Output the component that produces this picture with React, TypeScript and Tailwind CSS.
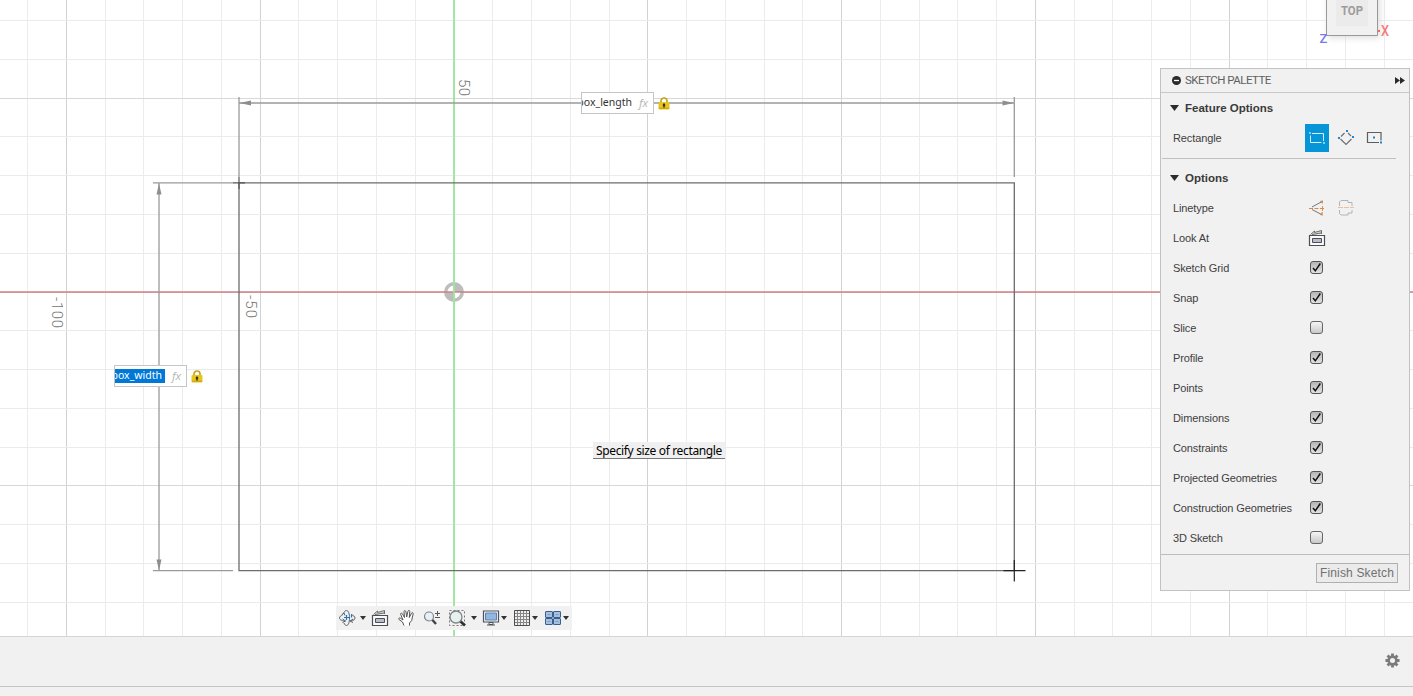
import type { ReactNode } from "react";

const STEP = 38.76;
const ORIGIN = { x: 454, y: 292 };

const columns = Array.from({ length: 37 }, (_, i) => i - 11);
const rows = Array.from({ length: 17 }, (_, i) => i - 7);

const toggles = [
  { label: "Sketch Grid", on: true },
  { label: "Snap", on: true },
  { label: "Slice", on: false },
  { label: "Profile", on: true },
  { label: "Points", on: true },
  { label: "Dimensions", on: true },
  { label: "Constraints", on: true },
  { label: "Projected Geometries", on: true },
  { label: "Construction Geometries", on: true },
  { label: "3D Sketch", on: false },
];

function SketchCanvas() {
  return (
    <svg width="1413" height="636" className="absolute inset-0 font-['Roboto',sans-serif]">
      {/* Grid */}
      {columns.map((i) => (
        <line
          key={`c${i}`}
          x1={Math.floor(ORIGIN.x + i * STEP) + 0.5}
          x2={Math.floor(ORIGIN.x + i * STEP) + 0.5}
          y1="0"
          y2="636"
          stroke={i % 5 === 0 ? "#d2d2d2" : "#ececec"}
        />
      ))}
      {rows.map((i) => (
        <line
          key={`r${i}`}
          x1="0"
          x2="1413"
          y1={Math.floor(ORIGIN.y + i * STEP) + 0.5}
          y2={Math.floor(ORIGIN.y + i * STEP) + 0.5}
          stroke={i % 5 === 0 ? "#d8d8d8" : "#ebebeb"}
        />
      ))}

      {/* Origin */}
      <circle cx="454" cy="292" r="10" fill="#bdbdbd" />
      <path d="M454 292V285.500A6.500 6.500 0 0 0 447.500 292ZM454 292h6.500a6.500 6.500 0 0 1-6.500 6.500Z" fill="#fff" />

      {/* Axes */}
      <path d="M0 292H1413" stroke="#cd8286" strokeWidth="1.300" />
      <path d="M454 0V636" stroke="#9ae79c" strokeWidth="1.800" />

      {/* Rectangle */}
      <path d="M239 182.800H1014.300V570.700H239Z" fill="none" stroke="#6c6c6c" strokeWidth="1.300" />
      <path d="M233 182.800h12M239 177v12" stroke="#555" strokeWidth="1.200" />
      <path d="M1003.500 570.700h22M1014.300 560v21.500" stroke="#222" strokeWidth="1.200" />

      {/* Dimension lines */}
      <g stroke="#9a9a9a" strokeWidth="1.300" fill="none">
        <path d="M239 103H1014M239 97v80M1014.300 97v80" />
        <path d="M159 183V571M153 182.800h80M153 570.700h80" />
      </g>
      <g fill="#8e8e8e">
        <path d="M239.500 103l11.500-2.500v5ZM1014 103l-11.500-2.500v5Z" />
        <path d="M159 183.500l-2.500 11h5ZM159 570.500l-2.500-11h5Z" />
      </g>

      {/* Axis labels */}
      <g fill="#747474" fontSize="15" fontWeight="300">
        <text transform="translate(458.500 79) rotate(90)" textLength="17">50</text>
        <text transform="translate(246 295) rotate(90)" textLength="23">-50</text>
        <text transform="translate(52 297) rotate(90)" textLength="31">-100</text>
      </g>
    </svg>
  );
}

function Lock() {
  return (
    <svg width="12" height="13" viewBox="0 0 12 13">
      <path d="M3 6V4a3 3 0 0 1 6 0v2" fill="none" stroke="#c9a321" strokeWidth="1.700" />
      <rect x=".5" y="5" width="11" height="7.500" rx="1" fill="#e7c51b" />
      <path d="M1 10.500h10v1.500H1Z" fill="#d0a818" />
      <path d="M6 6.500v4M4.800 8h2.400" stroke="#302a10" strokeWidth="1.500" />
    </svg>
  );
}

function DimensionInput({ value, selected }: { value: string; selected?: boolean }) {
  return (
    <div className="flex items-center gap-1">
      <div className="flex h-[22px] w-[73px] items-center justify-between overflow-hidden border border-[#c5c5c5] bg-white pr-[5px] font-['Noto_Sans',sans-serif]">
        <span className="flex h-[14px] w-[50px] justify-end overflow-hidden">
          <span
            className={
              selected
                ? "bg-[#0078d7] pr-[3px] text-[10.5px] leading-[13px] text-white"
                : "text-[10.5px] leading-[13px] text-[#333]"
            }
          >
            {value}
          </span>
        </span>
        <span className="font-['Open_Sans',sans-serif] text-[11.5px] leading-[14px] text-[#b5b5b5] italic">fx</span>
      </div>
      <Lock />
    </div>
  );
}

function ViewCube() {
  return (
    <svg width="80" height="50" className="absolute top-0 left-[1315px] font-['Roboto',sans-serif]">
      <defs>
        <filter id="cube-shadow" x="-30%" y="-30%" width="160%" height="160%">
          <feGaussianBlur stdDeviation="3" />
        </filter>
      </defs>
      <rect x="13" y="-8" width="52" height="46" fill="#c8c8c8" opacity=".6" filter="url(#cube-shadow)" />
      <path d="M11.500 -1V35.500H62.500V-1" fill="#f1f1f1" stroke="#999" />
      <rect x="21" y="0" width="32" height="26" fill="#ebebeb" />
      <text x="26" y="15" fontSize="13" fontWeight="700" fill="#9c9c9c" textLength="22" lengthAdjust="spacingAndGlyphs">TOP</text>
      <text x="4.500" y="43" fontSize="13" fill="#7777f0" fontWeight="500">Z</text>
      <text x="66" y="36" fontSize="14" fill="#f37b7b" fontWeight="500" textLength="8" lengthAdjust="spacingAndGlyphs">X</text>
      <rect x="63" y="30" width="2" height="2" fill="#ef6a6a" />
    </svg>
  );
}

function LookAtIcon() {
  return (
    <svg width="18" height="18" viewBox="0 0 18 18" fill="none" stroke="#4c4e55">
      <path d="M1.500 6.500h15v10h-15Z" fill="#fafafa" strokeWidth="1.200" />
      <path d="M4.500 9.500h9v4h-9Z" fill="#b9bccb" />
      <path d="M2.500 5.500L6.500 2v1.500L13.500 1.500v3.500M4 5.500l9-1.500" fill="#ddd" stroke="#6b6b6b" />
    </svg>
  );
}

function Checkbox({ on }: { on: boolean }) {
  return (
    <span
      className={
        on
          ? "flex size-[13px] items-center justify-center rounded-[3px] border border-[#555] bg-linear-to-b from-[#b5b5b5] to-[#e2e2e2]"
          : "flex size-[13px] items-center justify-center rounded-[3px] border border-[#666] bg-linear-to-b from-[#f5f5f5] to-[#c9c9c9]"
      }
    >
      {on && (
        <svg width="11" height="11" viewBox="0 0 11 11">
          <path d="M2 6l2.300 2.800L9.300 1.500" fill="none" stroke="#111" strokeWidth="1.500" />
        </svg>
      )}
    </span>
  );
}

function SectionTitle({ children }: { children: ReactNode }) {
  return (
    <div className="flex h-[30px] items-center gap-1.5 pt-0.5 pl-[9px] text-[11.5px] font-bold text-[#3a3a3a]">
      <svg width="9" height="6" viewBox="0 0 9 6" className="mb-0.5">
        <path d="M0 0h9L4.500 6Z" fill="#2b2b2b" />
      </svg>
      {children}
    </div>
  );
}

function Row({ label, children }: { label: string; children: ReactNode }) {
  return (
    <div className="flex h-[30px] items-center pl-3">
      <span className="w-[132px] shrink-0 tracking-[-0.12px] whitespace-nowrap">{label}</span>
      {children}
    </div>
  );
}

function SketchPalette() {
  return (
    <aside className="absolute top-[68px] left-[1160px] h-[523px] w-[250px] border border-[#c2c2c2] bg-[#f1f1f1] text-[11px] text-[#404040]">
      <header className="flex h-[24px] items-center border-b border-[#c8c8c8] pr-1 pl-[11px] text-[#606060]">
        <svg width="9" height="9" viewBox="0 0 9 9" className="mr-1">
          <circle cx="4.500" cy="4.500" r="4.500" fill="#2b2b2b" />
          <path d="M2 4.500h5" stroke="#fff" strokeWidth="1.300" />
        </svg>
        <span className="font-['Roboto',sans-serif] text-[11.5px] tracking-[-0.52px]">SKETCH PALETTE</span>
        <svg width="10" height="7" viewBox="0 0 10 7" className="ml-auto">
          <path d="M0 0l5 3.500L0 7ZM5 0l5 3.500L5 7Z" fill="#2b2b2b" />
        </svg>
      </header>

      <SectionTitle>Feature Options</SectionTitle>
      <Row label="Rectangle">
        <span className="flex h-[28px] w-6 items-center justify-center bg-[#0696d7]">
          <svg width="18" height="14" viewBox="0 0 18 14">
            <path d="M4 2.500h11.500V10M13.500 11.500H2.500V4.500" fill="none" stroke="#d9f0fb" />
            <path d="M1 1h2v2H1ZM15 11h2v2h-2Z" fill="#7bd0f6" />
          </svg>
        </span>
        <svg width="18" height="18" viewBox="0 0 18 18" className="ml-[8px]">
          <path d="M3.500 10l5.500 5.500 5.500-5.500M4 7.500L7.500 4M11 4L14 7" fill="none" stroke="#707070" strokeWidth="1.200" />
          <path d="M1 8h2v2H1ZM9 1h2v2H9ZM15 7h2v2h-2Z" fill="#1688d4" />
        </svg>
        <svg width="18" height="14" viewBox="0 0 18 14" className="ml-[11px]">
          <path d="M13 11.500h-11.500v-10h13.500V9.500" fill="none" stroke="#5e5e5e" strokeWidth="1.200" />
          <path d="M7 5.500h2v2H7ZM14 10.500h2v2h-2Z" fill="#1688d4" />
        </svg>
      </Row>
      <div className="mr-[13px] -mt-1 mb-1 ml-px h-[10px] border-b border-[#c0c0c0]" />

      <SectionTitle>Options</SectionTitle>
      <Row label="Linetype">
        <svg width="18" height="18" viewBox="0 0 18 18" className="ml-[3px]" fill="none">
          <path d="M4 8l11-6M4 10.500l10.500 5.500" stroke="#777" />
          <path d="M1 9.500h16" stroke="#df8746" strokeDasharray="4 1.500" />
          <path d="M14.500 7v5M12 2l3 2M14 1.500v3M12 16l3-2.500M14 13v3.500" stroke="#df8746" strokeWidth=".9" />
        </svg>
        <svg width="18" height="18" viewBox="0 0 18 18" className="ml-[11px]" fill="none">
          <path d="M2.500 7V3l1.500-1.500h7v2h4V7M2.500 11v3.500l1.500 1.500h7v-2h4V11" stroke="#b0b4b6" />
          <path d="M1 8.500h16" stroke="#eabf9e" strokeDasharray="5 1" />
        </svg>
      </Row>
      <Row label="Look At">
        <span className="ml-[3px]">
          <LookAtIcon />
        </span>
      </Row>
      {toggles.map((toggle) => (
        <Row key={toggle.label} label={toggle.label}>
          <span className="mb-px ml-[5px]">
            <Checkbox on={toggle.on} />
          </span>
        </Row>
      ))}
      <footer className="mt-px flex h-[37px] items-center justify-end border-t border-[#bdbdbd] pr-[11px]">
        <button className="h-[20px] w-[82px] border border-[#b0b0b0] bg-[#ebebeb] text-[12px] leading-[18px] tracking-[0.15px] whitespace-nowrap text-[#707070]">
          Finish Sketch
        </button>
      </footer>
    </aside>
  );
}

function Caret() {
  return (
    <svg width="6" height="4" viewBox="0 0 6 4">
      <path d="M0 0h6L3 4Z" fill="#333" />
    </svg>
  );
}

function NavigationBar() {
  return (
    <nav className="absolute top-[606px] left-[336px] flex h-[24px] w-[236px] items-center bg-[#f1f1f1] pl-[3px]">
      <svg width="17" height="18" viewBox="0 0 17 18" fill="none" stroke="#5a6069">
        <path d="M4.500 5C5 2.500 6.500 1.500 7.500 1.500c2 0 3 3.500 3 7.500s-1 7.500-3 7.500c-1 0-2-1-2.500-2.500" />
        <path d="M4 5.500C1.500 6.500.5 8 .5 9c0 2 3 3 6 3M12 5.500c2.500 1 4 2 4 3.500s-1.500 2.500-4 3" />
        <path d="M3 5.500l2-1.500 1 2.500M3.500 13.500L6.500 12 3.500 10M14 13.500l-3-1.500 3-2" />
        <path d="M7.500 6v5M5 8.500h5M12.500 5.500v3" stroke="#1679c6" strokeWidth="1.200" />
      </svg>
      <span className="ml-1"><Caret /></span>
      <span className="ml-[5px]"><LookAtIcon /></span>
      <svg width="17" height="18" viewBox="0 0 17 18" className="ml-[9px]" fill="#fff" stroke="#555">
        <path d="M6 16.500L4.500 13 1 10.500C.2 9 1.500 8.500 2.500 9.200L5 11 2.700 5.500c-.5-1.500 1-2 1.700-.7L6.500 8.500 6 2.700c0-1.500 1.500-1.500 1.900 0L8.700 8 10 2.200c.4-1.400 1.900-1 1.800.4L11.300 8.500l2.200-4.300c.8-1.200 2-.5 1.600.8L13.700 11.500 11.500 14v2.500" />
      </svg>
      <svg width="18" height="18" viewBox="0 0 18 18" className="ml-[8px]" fill="none">
        <path d="M9 10.500l4 4.500" stroke="#444" strokeWidth="2.400" />
        <circle cx="6" cy="7.500" r="4.500" fill="#e7f0f5" stroke="#7b848d" strokeWidth="1.200" />
        <path d="M12 4.500h5M14.500 2v5M12 8.500h5" stroke="#555" />
      </svg>
      <svg width="19" height="18" viewBox="0 0 19 18" className="ml-[7px]" fill="none">
        <path d="M1.500 1.500h15v15h-15Z" stroke="#777" strokeDasharray="2 2" />
        <path d="M12 12l5 4.500" stroke="#333" strokeWidth="2.800" />
        <circle cx="8" cy="8" r="6" fill="#e6f0ef" stroke="#7b858b" strokeWidth="1.300" />
      </svg>
      <span className="ml-1"><Caret /></span>
      <svg width="18" height="18" viewBox="0 0 18 18" className="ml-[5px]" fill="none">
        <path d="M1.500 2h15v11h-15Z" fill="#f6f6f6" stroke="#4e535b" strokeWidth="1.200" />
        <path d="M3.500 4h11v7h-11Z" fill="#91b7e1" stroke="#5b84b3" />
        <path d="M7 13.500h4v2H7ZM5 16h8" stroke="#4e535b" />
      </svg>
      <span className="ml-px"><Caret /></span>
      <svg width="18" height="18" viewBox="0 0 18 18" className="ml-[6px]" fill="none">
        <path d="M1.500 1.500h15v15h-15Z" fill="#eee" stroke="#4d4d4d" />
        <path d="M4.500 2v14M7.500 2v14M10.500 2v14M13.500 2v14M2 4.500h14M2 7.500h14M2 10.500h14M2 13.500h14" stroke="#858585" />
      </svg>
      <span className="ml-px"><Caret /></span>
      <svg width="18" height="18" viewBox="0 0 18 18" className="ml-[6px]" fill="#a5bfdf" stroke="#395f91">
        <rect x="1.500" y="2.500" width="7" height="6" rx=".5" />
        <rect x="9.500" y="2.500" width="7" height="6" rx=".5" />
        <rect x="1.500" y="9.500" width="7" height="6" rx=".5" />
        <rect x="9.500" y="9.500" width="7" height="6" rx=".5" />
        <path d="M3.500 5.500h3M11.500 5.500h3M3.500 12.500h3M11.500 12.500h3" stroke="#7e9fc8" />
      </svg>
      <span className="ml-px"><Caret /></span>
    </nav>
  );
}

export default function App() {
  return (
    <div className="flex h-[696px] w-[1413px] flex-col overflow-hidden bg-white font-['Liberation_Sans',sans-serif]">
      <main className="relative h-[636px] shrink-0 overflow-hidden">
        <SketchCanvas />
        <div className="absolute top-[92px] left-[581px]">
          <DimensionInput value="box_length" />
        </div>
        <div className="absolute top-[365px] left-[114px]">
          <DimensionInput value="box_width" selected />
        </div>
        <div className="absolute top-[442px] left-[593px] flex h-[17px] w-[132px] items-center justify-center border-b border-[#777] bg-[#f0f0f0] pt-0.5 font-['Noto_Sans',sans-serif] text-[12px] tracking-[-0.35px] whitespace-nowrap text-black">
          Specify size of rectangle
        </div>
        <ViewCube />
        <SketchPalette />
        <NavigationBar />
      </main>
      <footer className="flex flex-1 flex-col border-t border-[#d4d4d4] bg-[#f1f1f1]">
        <div className="flex h-[50px] items-center justify-end border-b border-[#c6c6c6] pr-[13px] pb-0.5">
          <svg width="15" height="15" viewBox="0 0 16 16">
            <g stroke="#7b7b7b" strokeWidth="3">
              <path d="M8 .5v15M.5 8h15M2.700 2.700l10.600 10.600M2.700 13.300L13.300 2.700" />
            </g>
            <circle cx="8" cy="8" r="5.500" fill="#7b7b7b" />
            <circle cx="8" cy="8" r="2.700" fill="#f1f1f1" />
          </svg>
        </div>
      </footer>
    </div>
  );
}
